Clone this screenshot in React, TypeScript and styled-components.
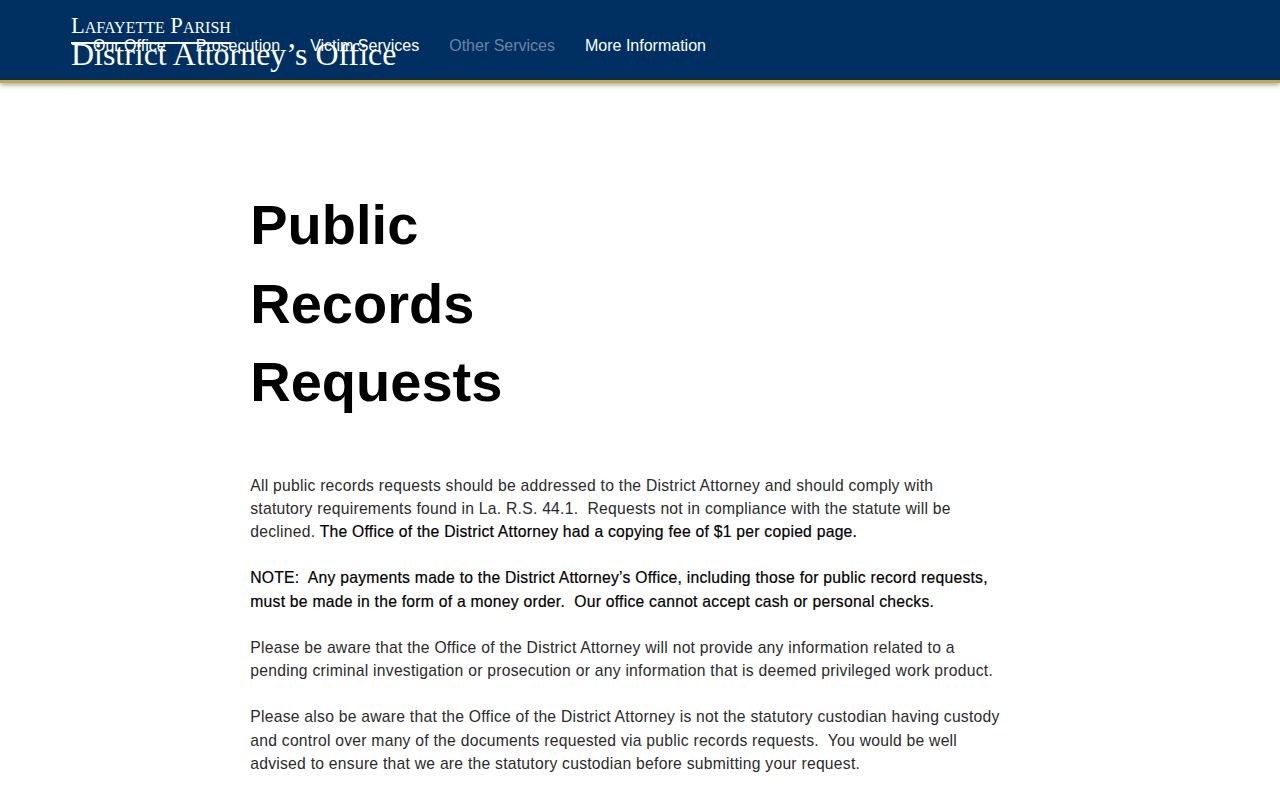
import React from "react";
import styled, { createGlobalStyle } from "styled-components";

const GlobalStyle = createGlobalStyle`
    html, body {
        margin: 0;
        padding: 0;
        background: #ffffff;
    }
    body {
        font-family: "Liberation Sans", Arial, sans-serif;
    }
`;

const Header = styled.header`
    height: 80px;
    background-color: #002f62;
    border-bottom: 3px solid #c9a944;
    box-shadow: 0 2px 5px rgba(0, 0, 0, 0.35);
    display: grid;
    grid-template-columns: auto;
    justify-content: start;
    padding-left: 71px;
    overflow: hidden;
`;

const Logo = styled.div`
    grid-area: 1 / 1;
    padding-top: 14px;
    color: #ffffff;
    font-family: "Liberation Serif", "Times New Roman", serif;
`;

const LogoTop = styled.div`
    font-size: 22.5px;
    line-height: 24px;
    font-variant: small-caps;
    white-space: nowrap;
`;

const LogoRule = styled.div`
    width: 160px;
    height: 2px;
    margin-top: 4px;
    background: #ffffff;
`;

const LogoName = styled.div`
    font-size: 31.9px;
    line-height: 22px;
    white-space: nowrap;
`;

const Nav = styled.nav`
    grid-area: 1 / 1;
    align-self: start;
    margin-top: 36px;
    margin-left: 7px;
    display: flex;
`;

const NavItem = styled.a<{ $dim?: boolean }>`
    padding: 0 15px;
    font-size: 16px;
    line-height: 20px;
    color: ${(p) => (p.$dim ? "#6c84a3" : "#ffffff")};
    text-decoration: none;
    white-space: nowrap;
    cursor: pointer;
`;

const Main = styled.main`
    width: 749.5px;
    margin: 0 auto;
    padding: 103px 30px 40px 0;
`;

const Title = styled.h1`
    width: 300px;
    margin: 0 0 52px 0;
    font-size: 56px;
    line-height: 78.5px;
    font-weight: 700;
    color: #000000;
`;

const Body = styled.div`
    font-size: 15.7px;
    letter-spacing: 0.25px;
    line-height: 23.2px;
    color: #2b2b2b;
`;

const Para = styled.p`
    margin: 0 0 23.2px 0;
`;

const Strong = styled.span`
    color: #000000;
    -webkit-text-stroke: 0.2px #000000;
`;

const navLinks = [
    { label: "Our Office" },
    { label: "Prosecution" },
    { label: "Victim Services" },
    { label: "Other Services", dim: true },
    { label: "More Information" },
];

function App() {
    return (
        <>
            <GlobalStyle />
            <Header>
                <Logo>
                    <LogoTop>Lafayette Parish</LogoTop>
                    <LogoRule />
                    <LogoName>District Attorney’s Office</LogoName>
                </Logo>
                <Nav>
                    {navLinks.map((item) => (
                        <NavItem key={item.label} $dim={item.dim}>
                            {item.label}
                        </NavItem>
                    ))}
                </Nav>
            </Header>
            <Main>
                <Title>Public Records Requests</Title>
                <Body>
                    <Para>
                        All public records requests should be addressed to the District Attorney and should comply with statutory requirements found in La. R.S. 44.1.{"\u00a0 "}Requests not in compliance with the statute will be declined. <Strong>The Office of the District Attorney had a copying fee of $1 per copied page.</Strong>
                    </Para>
                    <Para>
                        <Strong>NOTE:{"\u00a0 "}Any payments made to the District Attorney’s Office, including those for public record requests, must be made in the form of a money order.{"\u00a0 "}Our office cannot accept cash or personal checks.</Strong>
                    </Para>
                    <Para>
                        Please be aware that the Office of the District Attorney will not provide any information related to a pending criminal investigation or prosecution or any information that is deemed privileged work product.
                    </Para>
                    <Para>
                        Please also be aware that the Office of the District Attorney is not the statutory custodian having custody and control over many of the documents requested via public records requests.{"\u00a0 "}You would be well advised to ensure that we are the statutory custodian before submitting your request.
                    </Para>
                </Body>
            </Main>
        </>
    );
}

export default App;
